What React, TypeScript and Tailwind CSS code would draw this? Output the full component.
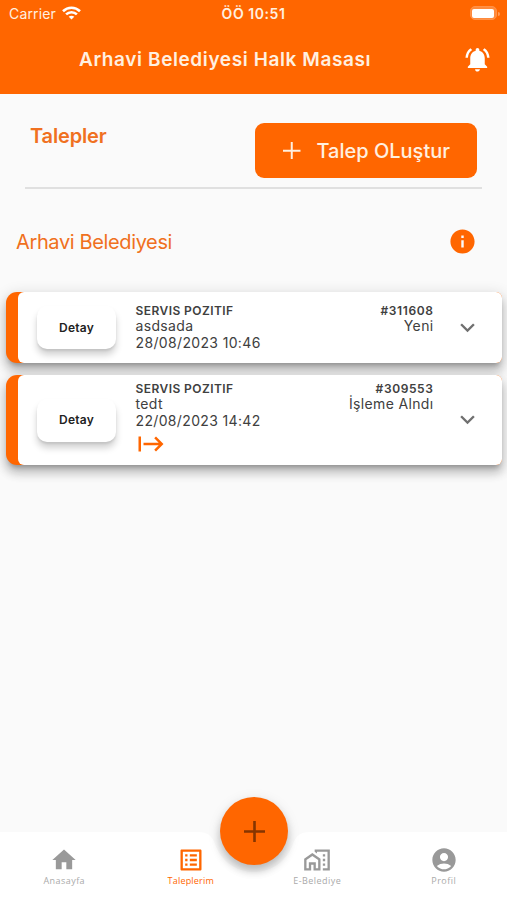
import React from "react";
import {
  MdAccountCircle,
  MdExpandMore,
  MdHome,
  MdInfo,
  MdListAlt,
  MdNotificationsActive,
  MdOutlineMapsHomeWork,
  MdStart,
} from "react-icons/md";

interface Request {
  id: string;
  title: string;
  text: string;
  date: string;
  status: string;
  forwarded?: boolean;
}

const requests: Request[] = [
  { id: "#311608", title: "SERVIS POZITIF", text: "asdsada", date: "28/08/2023 10:46", status: "Yeni" },
  { id: "#309553", title: "SERVIS POZITIF", text: "tedt", date: "22/08/2023 14:42", status: "İşleme Alndı", forwarded: true },
];

function Plus({ size, stroke }: { size: number; stroke: number }) {
  return (
    <svg width={size} height={size} viewBox={`0 0 ${size} ${size}`} stroke="currentColor" strokeWidth={stroke}>
      <path d={`M0 ${size / 2}H${size}M${size / 2} 0V${size}`} />
    </svg>
  );
}

function StatusBar() {
  return (
    <div className="flex h-[27px] items-center justify-between pr-[7px] pl-[9px] text-[#fff0e0]">
      <div className="flex w-[118px] items-center gap-[6px] text-[14px] tracking-[0.15px]">
        <span>Carrier</span>
        <svg className="-mt-[2px]" width="19" height="14" viewBox="0 0 19 14" fill="none" stroke="#fff" strokeWidth="2.6">
          <path d="M1 5.2C5.8.6 13.2.6 18 5.2" />
          <path d="M4.1 8.4c3-2.9 7.800-2.900 10.800 0" />
          <path d="M9.500 13.600 6.700 10.800c1.600-1.500 4-1.500 5.600 0Z" fill="#fff" stroke="none" />
        </svg>
      </div>
      <span className="text-[14px] font-semibold tracking-[0.55px]">ÖÖ 10:51</span>
      <div className="flex w-[120px] items-center justify-end gap-[1px]">
        <div className="-mt-[1px] h-[14px] w-[27px] rounded-[5px] border border-[#ff9248] bg-[#ff8a3c] p-[1.5px]">
          <div className="h-full rounded-[2px] bg-white" />
        </div>
        <div className="h-[4px] w-[2px] rounded-r bg-[#ff9c5c]" />
      </div>
    </div>
  );
}

function RequestCard({ item }: { item: Request }) {
  return (
    <div
      className={`${item.forwarded ? "h-[90.5px]" : "h-[70.5px]"} rounded-l-[11px] rounded-r-[6px] bg-[#ff6600] shadow-[0_5px_5px_-3px_rgba(0,0,0,0.26),0_8px_10px_1px_rgba(0,0,0,0.16),0_3px_14px_2px_rgba(0,0,0,0.12)]`}
    >
      <div className="ml-[12px] flex h-full items-center rounded-[6px] bg-white pr-[20px] pl-[19px]">
        <button className="mt-[1px] h-[43px] w-[79px] shrink-0 rounded-[10px] bg-white text-[12px] font-semibold tracking-[0.2px] text-[#222] shadow-[0_6px_7px_rgba(0,0,0,0.18),0_2px_2px_rgba(0,0,0,0.08)]">
          Detay
        </button>
        <div
          className={`${item.forwarded ? "pt-[7px]" : "pt-[12px]"} ml-[19.500px] flex-1 self-start text-[14px] leading-[17px] tracking-[0.35px] text-[#404040]`}
        >
          <div className="flex justify-between text-[12px] leading-[14px] font-semibold tracking-[0.43px]">
            <span>{item.title}</span>
            <span className="tracking-[0.6px]">{item.id}</span>
          </div>
          <div className="-mt-[1px] flex justify-between">
            <span>{item.text}</span>
            <span>{item.status}</span>
          </div>
          <div>{item.date}</div>
          {item.forwarded && <MdStart size={30} className="text-[#ff6600]" />}
        </div>
        <MdExpandMore size={29} className="ml-[19.500px] shrink-0 text-[#707070]" />
      </div>
    </div>
  );
}

const tabs = [
  { label: "Anasayfa", icon: MdHome, active: false },
  { label: "Taleplerim", icon: MdListAlt, active: true },
  { label: "E-Belediye", icon: MdOutlineMapsHomeWork, active: false },
  { label: "Profil", icon: MdAccountCircle, active: false },
];

function BottomBar() {
  return (
    <nav className="relative h-[68px]">
      <svg className="absolute inset-0" width="507" height="68" viewBox="0 0 507 68">
        <path d="M0 0H198C208 0 212 4 215 12C221 29 236 40 254 40S287 29 293 12C296 4 300 0 310 0H507V68H0Z" fill="#fff" />
      </svg>
      <button className="absolute top-[-35px] left-[220px] flex h-[68px] w-[68px] items-center justify-center rounded-full bg-[#ff6600] text-[#853500] shadow-[0_6px_8px_rgba(0,0,0,0.2),0_3px_14px_rgba(0,0,0,0.1)]">
        <Plus size={21} stroke={2.6} />
      </button>
      <div className="pointer-events-none relative grid grid-cols-4 pt-[14px] pl-[1px]">
        {tabs.map(({ label, icon: Icon, active }) => (
          <div key={label} className={`flex flex-col items-center ${active ? "text-[#ff6600]" : "text-[#999]"}`}>
            <Icon size={28} />
            <span
              className={`font-['Open_Sans',sans-serif] text-[9px] leading-[13px] ${active ? "font-medium tracking-[0.2px]" : "tracking-[0.45px] text-[#aaa]"}`}
            >
              {label}
            </span>
          </div>
        ))}
      </div>
    </nav>
  );
}

export default function App() {
  return (
    <div className="flex h-[900px] w-[507px] flex-col overflow-hidden bg-[#fafafa] font-['Inter',sans-serif]">
      <header className="h-[94px] bg-[#ff6600]">
        <StatusBar />
        <div className="flex h-[66px] items-center justify-between pr-[15px] pl-[79px] text-[#fff0e0]">
          <h1 className="pt-[1px] text-[19px] font-semibold tracking-[0.6px]">Arhavi Belediyesi Halk Masası</h1>
          <MdNotificationsActive size={29} className="-mt-[2px] text-white" />
        </div>
      </header>
      <main className="flex-1">
        <div className="mx-[25px] flex h-[95px] items-start justify-between border-b-2 border-[#e0e0e0] pt-[29px] pr-[5px] pl-[5px]">
          <h2 className="text-[20px] leading-[26px] font-semibold tracking-[-0.15px] text-[#f07020]">Talepler</h2>
          <button className="flex h-[55px] w-[222px] items-center rounded-[9px] bg-[#ff6600] pl-[28px] text-[20px] font-medium text-[#fff0e0]">
            <Plus size={17.5} stroke={2} />
            <span className="ml-[16px]">Talep OLuştur</span>
          </button>
        </div>
        <div className="mt-[37px] flex h-[30px] items-center justify-between pr-[30px] pl-[16px]">
          <span className="pt-[1px] text-[20px] tracking-[-0.37px] text-[#f07020]">Arhavi Belediyesi</span>
          <MdInfo size={29} className="text-[#ff6600]" />
        </div>
        <div className="mt-[36px] flex flex-col gap-[12px] pr-[5px] pl-[6px]">
          {requests.map((item) => (
            <RequestCard key={item.id} item={item} />
          ))}
        </div>
      </main>
      <BottomBar />
    </div>
  );
}
